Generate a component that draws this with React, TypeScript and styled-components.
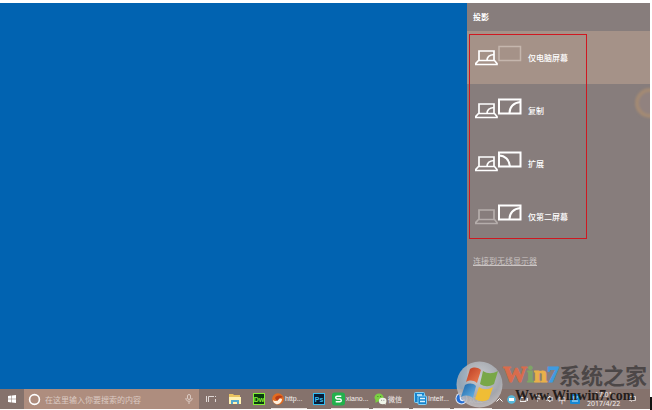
import React from "react";
import styled, { createGlobalStyle } from "styled-components";

const GlobalStyle = createGlobalStyle`
  * { box-sizing: border-box; }
  html, body, #root { height: 100%; }
  body {
    margin: 0;
    background: #fff;
    overflow: hidden;
    font-family: "Noto Sans", "Noto Sans CJK SC", sans-serif;
    font-size: 8px;
  }
  button, input { font: inherit; color: inherit; border: 0; background: none; padding: 0; }
`;

const Screen = styled.div`
  position: relative;
  display: flex;
  flex-direction: column;
  height: 100%;
  padding: 3px 2px 1px 0;
`;

const Desktop = styled.main`
  flex: 1;
  min-height: 0;
  display: flex;
  justify-content: flex-end;
  background: #0163b1;
`;

const Panel = styled.aside`
  position: relative;
  width: 183px;
  overflow: hidden;
  background: #877d7c;
  color: #fff;
`;

const PanelTitle = styled.h1`
  margin: 0;
  padding: 0 6px;
  font-size: 8px;
  line-height: 28px;
  font-weight: 700;
`;

const Modes = styled.div`
  position: relative;
`;

const Highlight = styled.div`
  position: absolute;
  top: 3px;
  left: 2px;
  bottom: 4px;
  width: 118px;
  border: 1px solid #cf1820;
  pointer-events: none;
`;

const ModeButton = styled.button<{ $active?: boolean }>`
  display: flex;
  align-items: center;
  gap: 6px;
  width: 100%;
  height: 53px;
  padding: 0 8px;
  text-align: left;
  font-weight: 500;
  background: ${(p) => (p.$active ? "#a59288" : "transparent")};
  svg { flex: none; margin-bottom: 4px; }
`;

const WirelessLink = styled.a`
  display: inline-block;
  margin: 12px 6px;
  line-height: 12px;
  color: #cbc5c4;
  text-decoration: underline;
  text-underline-offset: 1px;
`;

const Ring = styled.span`
  position: absolute;
  top: 85px;
  right: -15px;
  width: 30px;
  height: 30px;
  border: 4px solid #a38a74;
  border-radius: 50%;
  background: #91827f;
  filter: blur(1px);
`;

const Taskbar = styled.footer`
  display: flex;
  align-items: stretch;
  height: 20px;
  background: #85726c;
  color: #f5f0ee;
`;

const StartButton = styled.button`
  display: grid;
  place-items: center;
  flex: none;
  width: 24px;
`;

const SearchBox = styled.label`
  display: flex;
  align-items: center;
  gap: 4px;
  flex: none;
  width: 175px;
  padding: 0 6px 0 4px;
  background: #ae8d7e;
  svg { flex: none; }
`;

const SearchInput = styled.input`
  flex: 1;
  min-width: 0;
  outline: 0;
  &::placeholder { color: #dccbc3; opacity: 1; }
`;

const IconButton = styled.button`
  display: grid;
  place-items: center;
  flex: none;
  width: 24px;
`;

const Tasks = styled.nav`
  display: flex;
  flex: none;
  gap: 4px;
`;

const TaskButton = styled.button<{ $width: number }>`
  display: flex;
  align-items: center;
  gap: 1px;
  flex: none;
  width: ${(p) => p.$width}px;
  padding: 0 0 0 1px;
  font-size: 7px;
  white-space: nowrap;
  border-bottom: 1px solid #e8dfdc;
  svg { flex: none; }
`;

const TaskLabel = styled.span`
  font-family: "Liberation Sans", "Noto Sans CJK SC", sans-serif;
`;

const Tray = styled.div`
  display: flex;
  align-items: center;
  gap: 4px;
  flex: 1;
  padding: 0 14px 0 4px;
  svg { flex: none; }
`;

const Clock = styled.time`
  display: flex;
  flex-direction: column;
  align-items: center;
  margin: 0 auto 0 3px;
  font: 7px/9px "Noto Sans", sans-serif;
`;

const Watermark = styled.div`
  position: absolute;
  right: 5px;
  bottom: 2px;
  display: flex;
  align-items: flex-start;
  pointer-events: none;
  svg { flex: none; }
`;

const WatermarkText = styled.div`
  display: flex;
  flex-direction: column;
`;

const Brand = styled.div`
  display: flex;
  align-items: center;
  height: 26px;
  font: 700 22px/26px "Noto Sans CJK SC", sans-serif;
  color: #4c4747;
  white-space: nowrap;
`;

const Tint = styled.span<{ $color: string }>`
  font: 700 24px/26px "Liberation Serif", serif;
  color: ${(p) => p.$color};
  -webkit-text-stroke: 1px ${(p) => p.$color};
`;

const Site = styled.div`
  padding-left: 12px;
  font: 700 14px/18px "Liberation Serif", serif;
  color: #241d1b;
`;

const Corner = styled.span`
  position: absolute;
  right: 0;
  bottom: 0;
  width: 2px;
  height: 13px;
  background: #111;
`;

type ScreenKind = "off" | "left" | "right";

function ModeIcon({ laptop, monitor }: { laptop: boolean; monitor: ScreenKind }) {
  const dim = "#b5adab";
  const lap = laptop ? "#fff" : dim;
  const mon = monitor === "off" ? "#c5b6ad" : "#fff";
  return (
    <svg width="47" height="21" viewBox="0 0 47 21" fill="none" strokeWidth="1.7">
      <g stroke={lap}>
        <path d="M4 15.500V6h15v9.500M3.500 15.500h16l2.500 3v1H.8v-1z" />
        {laptop && <path d="M12 15.500c0-3.500 2-5.500 7-6" />}
      </g>
      <g stroke={mon} strokeWidth={monitor === "off" ? 1.5 : 2}>
        <rect x="24" y="1.500" width="21.500" height="14" />
        {monitor === "right" && <path d="M34.500 15c0-6 4-10.500 11-11" />}
        {monitor === "left" && <path d="M24 4.500c6 0 10.500 4.500 11 11" />}
      </g>
    </svg>
  );
}

function Folder() {
  return (
    <svg width="12" height="12" viewBox="0 0 12 12">
      <path fill="#e9c260" d="M0 1h4l1 1h6v9H0z" />
      <path fill="#fff0b0" d="M0 4h12v7H0z" />
      <path fill="#54a9cc" d="M2 7h8v4H8V9H4v2H2z" />
    </svg>
  );
}

function AppTile({ label, color, back }: { label: string; color: string; back: string }) {
  return (
    <svg width="12" height="12" viewBox="0 0 12 12">
      <rect x=".5" y=".5" width="11" height="11" fill={back} stroke={color} />
      <text x="6" y="9" textAnchor="middle" fontFamily="Liberation Sans" fontWeight="700" fontSize="7" fill={color}>
        {label}
      </text>
    </svg>
  );
}

function Browser() {
  return (
    <svg width="12" height="12" viewBox="0 0 12 12">
      <circle cx="6" cy="6" r="5.800" fill="#e36b20" />
      <path fill="#fff0dd" d="M1 7c2 2 5 1 6-2l3 1c0 3-3 6-6 5C2 10 1 9 1 7z" />
      <path fill="#b83c18" d="M3 5c2-3 5-3 8-1L8 5 5 8z" />
    </svg>
  );
}

function Sheet() {
  return (
    <svg width="13" height="14" viewBox="0 0 14 14">
      <rect width="14" height="14" rx="3" fill="#23b04c" />
      <path d="M10 4H5.500a1.500 1.500 0 000 3h3a1.500 1.500 0 010 3H4" fill="none" stroke="#fff" strokeWidth="1.500" />
    </svg>
  );
}

function Chat() {
  return (
    <svg width="13" height="12" viewBox="0 0 12 12">
      <ellipse cx="4.500" cy="4.500" rx="4.500" ry="4" fill="#7bd043" />
      <path fill="#7bd043" d="M1 7l0 3 3-2z" />
      <ellipse cx="8.200" cy="8" rx="3.800" ry="3.200" fill="#eef5e9" />
      <path fill="#eef5e9" d="M9 10l2 2V9z" />
      <path d="M3 3.500h.8M5.800 3.500h.8" stroke="#376b25" />
      <path d="M6.800 7.300h.8M9 7.300h.8" stroke="#777" />
    </svg>
  );
}

function Intel() {
  return (
    <svg width="13" height="13" viewBox="0 0 13 13">
      <rect x=".5" y=".5" width="10" height="10" rx="1" fill="#1683cd" stroke="#84d1f5" />
      <rect x="4" y="4" width="8.500" height="8.500" rx="1" fill="#1683cd" stroke="#84d1f5" />
      <path d="M3 3h5M6 6.500h5M6 9.500h5" fill="none" stroke="#d8f3ff" strokeWidth="1.300" />
    </svg>
  );
}

function Swirl() {
  return (
    <svg width="13" height="13" viewBox="0 0 13 13">
      <circle cx="6.500" cy="6.500" r="6" fill="#dfeaf8" />
      <circle cx="6.500" cy="6.500" r="5" fill="#246dd4" />
      <path d="M5.500 3v3.500c0 2.500 3 2.500 4 .8" fill="none" stroke="#e6f1ff" strokeWidth="1.600" />
    </svg>
  );
}

function WindowsOrb() {
  return (
    <svg width="47" height="47" viewBox="0 0 47 47">
      <defs>
        <radialGradient id="orb" cx=".5" cy=".35" r=".65">
          <stop offset="0" stopColor="#d0d5db" />
          <stop offset=".7" stopColor="#a8adb4" />
          <stop offset="1" stopColor="#c8c3c3" />
        </radialGradient>
        <linearGradient id="red" x1="0" y1="0" x2="1" y2="1">
          <stop stopColor="#b93b24" /><stop offset="1" stopColor="#ef8050" />
        </linearGradient>
        <linearGradient id="blue" x1="0" y1="0" x2="1" y2="1">
          <stop stopColor="#1c62a5" /><stop offset="1" stopColor="#66b6e8" />
        </linearGradient>
      </defs>
      <circle cx="23.500" cy="23.500" r="23" fill="url(#orb)" opacity=".88" />
      <path fill="url(#red)" d="M14 8c4-2 7-2 11 1l-4 13c-4-3-7-3-11-1z" />
      <path fill="#79a747" d="M27 10c5 3 9 3 15 0l-4 13c-5 3-9 3-14 0z" />
      <path fill="url(#blue)" d="M9 24c4-2 8-2 11 1l-3 12c-4-3-8-3-12-1z" />
      <path fill="#efbd35" d="M23 26c4 3 9 3 14 0l-4 12c-4 3-9 3-14 0z" />
    </svg>
  );
}

const modes: { label: string; laptop: boolean; monitor: ScreenKind }[] = [
  { label: "仅电脑屏幕", laptop: true, monitor: "off" },
  { label: "复制", laptop: true, monitor: "right" },
  { label: "扩展", laptop: true, monitor: "left" },
  { label: "仅第二屏幕", laptop: false, monitor: "right" },
];

export default function App() {
  return (
    <Screen>
      <GlobalStyle />
      <Desktop>
        <Panel>
          <PanelTitle>投影</PanelTitle>
          <Modes>
            {modes.map((m, i) => (
              <ModeButton key={m.label} $active={i === 0}>
                <ModeIcon laptop={m.laptop} monitor={m.monitor} />
                {m.label}
              </ModeButton>
            ))}
            <Highlight />
          </Modes>
          <WirelessLink href="#wireless">连接到无线显示器</WirelessLink>
          <Ring />
        </Panel>
      </Desktop>
      <Taskbar>
        <StartButton aria-label="开始">
          <svg width="8" height="8" viewBox="0 0 8 8" fill="#fff">
            <path d="M0 1l3.500-.5v3.200H0zM4 .4L8 0v3.700H4zM0 4.200h3.500v3.200L0 7zM4 4.200h4V8l-4-.5z" />
          </svg>
        </StartButton>
        <SearchBox>
          <svg width="13" height="13" viewBox="0 0 13 13">
            <circle cx="6.500" cy="6.500" r="4.900" fill="none" stroke="#fff" strokeWidth="1.600" />
          </svg>
          <SearchInput aria-label="搜索" placeholder="在这里输入你要搜索的内容" />
          <svg width="8" height="10" viewBox="0 0 8 10" fill="none" stroke="#dccbc3">
            <rect x="2.500" y=".5" width="3" height="5" rx="1.500" />
            <path d="M1 4v1c0 3 6 3 6 0V4M4 7.500V10" />
          </svg>
        </SearchBox>
        <IconButton aria-label="任务视图">
          <svg width="10" height="8" viewBox="0 0 10 8" fill="none" stroke="#e0d8d5">
            <path d="M.5 1v6M2.500 7V1.500H8M9.500 1v1M9.500 4v3" />
          </svg>
        </IconButton>
        <IconButton aria-label="文件资源管理器"><Folder /></IconButton>
        <IconButton aria-label="Dreamweaver">
          <AppTile label="Dw" color="#83ef35" back="#0a3c10" />
        </IconButton>
        <TaskButton $width={36}><Browser /><TaskLabel>http...</TaskLabel></TaskButton>
        <IconButton aria-label="Photoshop">
          <AppTile label="Ps" color="#35bdf2" back="#071e38" />
        </IconButton>
        <Tasks>
          <TaskButton $width={38}><Sheet /><TaskLabel>xiano...</TaskLabel></TaskButton>
          <TaskButton $width={36}><Chat /><TaskLabel>微信</TaskLabel></TaskButton>
          <TaskButton $width={37}><Intel /><TaskLabel>Intelf...</TaskLabel></TaskButton>
          <TaskButton $width={38}><Swirl /><TaskLabel>欢迎...</TaskLabel></TaskButton>
        </Tasks>
        <Tray>
          <svg width="7" height="5" viewBox="0 0 7 5" fill="none" stroke="#fff"><path d="M.5 4.500l3-3 3 3" /></svg>
          <svg width="9" height="9" viewBox="0 0 9 9"><circle cx="4.500" cy="4.500" r="4.300" fill="#58b9dc" /><path d="M2 3h5v3H2z" fill="#fff" /></svg>
          <svg width="9" height="8" viewBox="0 0 9 8" fill="none" stroke="#eee"><path d="M0 2.500h6v4H0zM7.500 3v3" /></svg>
          <svg width="9" height="8" viewBox="0 0 9 8" fill="none" stroke="#eee"><path d="M1 2c2-2 5-2 7 0M2 4c2-1 3-1 5 0M4 6h1" /></svg>
          <svg width="8" height="8" viewBox="0 0 8 8" fill="none" stroke="#eee"><path d="M0 3h2l2-2v6L2 5H0M6 2v4" /></svg>
          <span>中</span>
          <svg width="10" height="10" viewBox="0 0 10 10"><rect width="10" height="10" rx="1" fill="#1688d4" /><path d="M2 3h6M3 5h4M2 7h6" stroke="#cfefff" /></svg>
          <Clock><span>17:01</span><span>2017/4/22</span></Clock>
          <svg width="7" height="7" viewBox="0 0 7 7" fill="none" stroke="#d8cfcc"><path d="M.5.5h6v4h-3l-1 1v-1h-2z" /></svg>
        </Tray>
      </Taskbar>
      <Watermark>
        <WindowsOrb />
        <WatermarkText>
          <Brand>
            <Tint $color="#d96c4c">W</Tint>
            <Tint $color="#7fa565">i</Tint>
            <Tint $color="#e9b04a">n</Tint>
            <Tint $color="#3f9be0">7</Tint>
            系统之家
          </Brand>
          <Site>Www.Winwin7.com</Site>
        </WatermarkText>
      </Watermark>
      <Corner />
    </Screen>
  );
}
